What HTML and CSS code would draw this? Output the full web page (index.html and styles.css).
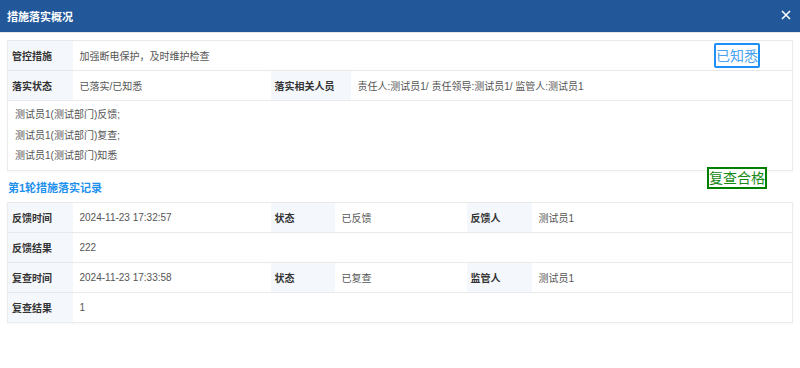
FILE: index.html
```html
<!DOCTYPE html>
<html lang="zh-CN">
<head>
	<meta charset="UTF-8">
	<meta name="viewport" content="width=device-width, initial-scale=1.0">
	<title>措施落实概况</title>
	<link rel="stylesheet" href="styles.css">
</head>
<body>

	<div class="dialog">
		<div class="dialog__header">
			<span class="dialog__title">措施落实概况</span>
			<svg class="dialog__close" width="10" height="10" viewBox="0 0 10 10">
				<path d="M1 1 L9 9 M9 1 L1 9" stroke="#fff" stroke-width="1.6" fill="none"/>
			</svg>
		</div>

		<div class="dialog__body">
			<table class="info">
				<colgroup>
					<col style="width:65px">
					<col style="width:198px">
					<col style="width:80px">
					<col>
				</colgroup>
				<tr>
					<th>管控措施</th>
					<td colspan="3">加强断电保护，及时维护检查</td>
				</tr>
				<tr>
					<th>落实状态</th>
					<td>已落实/已知悉</td>
					<th>落实相关人员</th>
					<td>责任人:测试员1/ 责任领导:测试员1/ 监管人:测试员1</td>
				</tr>
				<tr>
					<td colspan="4" class="log">
						<p>测试员1(测试部门)反馈;</p>
						<p>测试员1(测试部门)复查;</p>
						<p>测试员1(测试部门)知悉</p>
					</td>
				</tr>
			</table>

			<h3 class="section-title">第1轮措施落实记录</h3>

			<table class="info">
				<colgroup>
					<col style="width:65px">
					<col style="width:198px">
					<col style="width:64px">
					<col style="width:132px">
					<col style="width:65px">
					<col>
				</colgroup>
				<tr>
					<th>反馈时间</th>
					<td>2024-11-23 17:32:57</td>
					<th>状态</th>
					<td>已反馈</td>
					<th>反馈人</th>
					<td>测试员1</td>
				</tr>
				<tr>
					<th>反馈结果</th>
					<td colspan="5">222</td>
				</tr>
				<tr>
					<th>复查时间</th>
					<td>2024-11-23 17:33:58</td>
					<th>状态</th>
					<td>已复查</td>
					<th>监管人</th>
					<td>测试员1</td>
				</tr>
				<tr>
					<th>复查结果</th>
					<td colspan="5">1</td>
				</tr>
			</table>

			<div class="stamp stamp--known">已知悉</div>
			<div class="stamp stamp--passed">复查合格</div>
		</div>
	</div>

</body>
</html>
```

FILE: styles.css
```css
* {
    margin: 0;
    padding: 0;
    box-sizing: border-box;
}

body {
    width: 800px;
    height: 368px;
    background: #fff;
    font-family: 'Liberation Sans', 'Noto Sans CJK SC', sans-serif;
    font-size: 10px;
    color: #555;
    overflow: hidden;
}

.dialog__header {
    display: flex;
    align-items: center;
    justify-content: space-between;
    height: 33px;
    padding: 0 9px 1px 7px;
    background-color: #22589a;
    border-bottom: 1px solid #e4e7ec;
}

.dialog__title {
    color: #fff;
    font-size: 11px;
    font-weight: bold;
}

.dialog__close {
    display: block;
    margin-bottom: 2px;
}

.dialog__body {
    position: relative;
    padding: 7px 7px 0 7px;
}

.info {
    width: 786px;
    border-collapse: collapse;
    table-layout: fixed;
    border: 1px solid #ececec;
    box-shadow: 0 1px 2px rgba(0, 0, 0, 0.04);
}

.info th,
.info td {
    height: 30px;
    padding: 0 4px 0 7px;
    text-align: left;
    vertical-align: middle;
    border-top: 1px solid #e9e9e9;
    white-space: nowrap;
}

.info th {
    background-color: #f4f7fc;
    color: #333;
    font-weight: bold;
    padding-left: 4px;
}

.info td.log {
    height: 69px;
    padding: 4px 8px 3px 7px;
}

.log p {
    line-height: 20.5px;
}

.section-title {
    height: 31px;
    padding-top: 8px;
    padding-left: 1px;
    color: #1e90ee;
    font-size: 11px;
    font-weight: bold;
}

.stamp {
    position: absolute;
    display: flex;
    align-items: center;
    justify-content: center;
    background: #fff;
    line-height: 1;
    white-space: nowrap;
}

.stamp--known {
    left: 714px;
    top: 10px;
    width: 46px;
    height: 25px;
    border: 2px solid #1e90f5;
    border-radius: 2px;
    color: #4aa3ef;
    font-size: 14px;
}

.stamp--passed {
    left: 707px;
    top: 134px;
    width: 60px;
    height: 22px;
    border: 2px solid #008000;
    color: #168a16;
    font-size: 14px;
}
```
